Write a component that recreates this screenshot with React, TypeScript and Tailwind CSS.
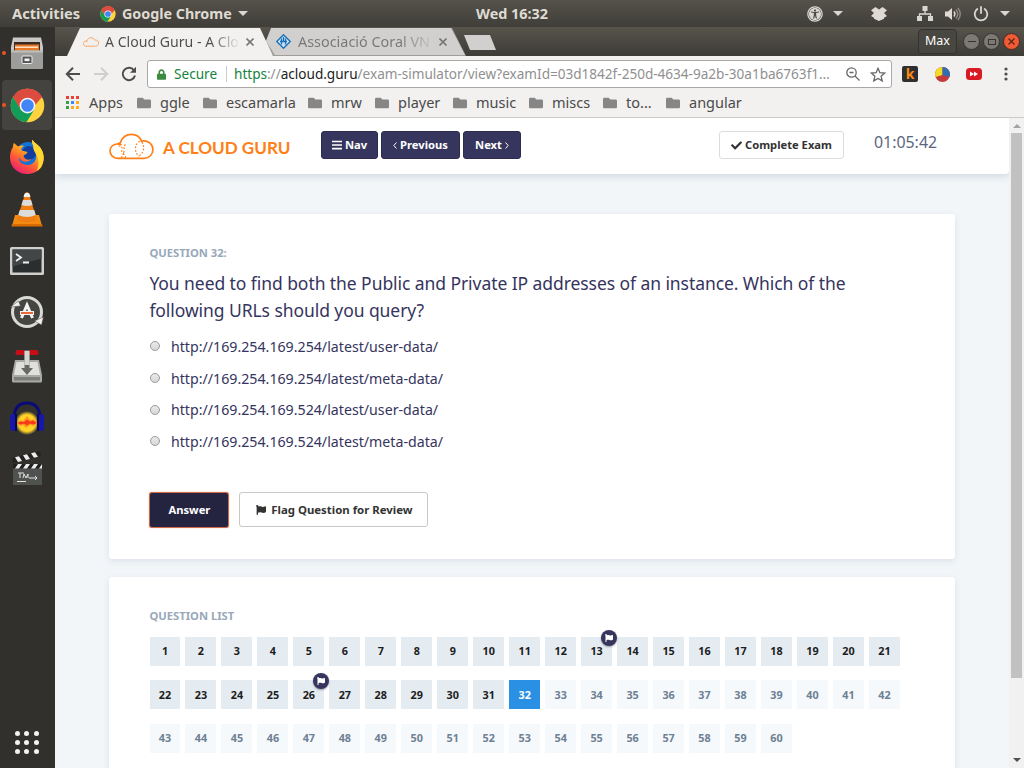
import React from 'react';
import { FaFlag, FaCheck, FaBars, FaUniversalAccess, FaLock, FaFolder } from 'react-icons/fa';

const dots = [0, 1, 2];

function ChromeLogo({ size }: { size: number }) {
  return (
    <svg width={size} height={size} viewBox="0 0 48 48" className="shrink-0">
      <circle cx="24" cy="24" r="23" fill="#ffd23f" />
      <path d="M24 24 4.1 12.5A23 23 0 0 1 43.9 12.5L34 24Z" fill="#dd4b3e" />
      <path d="M24 13H44.2A23 23 0 0 0 4.1 12.5L14 30Z" fill="#dd4b3e" />
      <path d="M4.1 12.5A23 23 0 0 0 22.5 47L33.5 29.5 24 34.5 14.5 29.5Z" fill="#119d58" />
      <circle cx="24" cy="24" r="10.8" fill="#f4f4f4" />
      <circle cx="24" cy="24" r="8.6" fill="#4285f4" />
    </svg>
  );
}

function CloudIcon({ className, detailed }: { className: string; detailed?: boolean }) {
  return (
    <svg viewBox="0 0 46 27" className={className} fill="none" stroke="#ff7f16" strokeWidth={detailed ? 1.7 : 2.6}>
      <path d="M9 25.6C4.400 25.600 1 22 1 18.200c0-4.200 3.200-7.200 7.600-7.300l3-1.200C13.400 4.400 17.600 1.100 23 1.100c4.700 0 8.600 2.900 10.300 6.900C40 6.800 44.900 11 44.900 16.600c0 5-3.800 9-8.900 9Z" />
      <path d="M8.600 10.900q2.400-.2 4.200 1" />
      {detailed && (
        <g strokeWidth="1.200" strokeDasharray="1.800 1.700">
          <path d="M9.500 13q4.500-.5 4 4-1.500 2 1 3.500 0 3-2.500 4.500M17 11.500q-3 2-1 5-.5 3-2 4 3 2 3 4.500M31.500 8q-4.500 3-4.500 8 .5 5 3.500 7.500M33.500 9q3 4 1.500 8.500-1 4-4.500 5.500" />
        </g>
      )}
    </svg>
  );
}

function Caret() {
  return <span className="block h-0 w-0 border-x-[5px] border-t-[5px] border-x-transparent border-t-[#d9d7d2]" />;
}

function FilesIcon() {
  return (
    <svg width="36" height="36" viewBox="0 0 36 36">
      <path d="M4 2.500h28L34 12v20a2 2 0 0 1-2 2H4a2 2 0 0 1-2-2V12Z" fill="#c9c9c9" />
      <path d="M5 7h26v10H5z" fill="#3a2a20" />
      <path d="M6 9.500h24v7.500H6z" fill="#e9792a" />
      <path d="M6 11.500h23v1.500H6z" fill="#ffe2c0" />
      <path d="M2 15.500h32V32a2 2 0 0 1-2 2H4a2 2 0 0 1-2-2Z" fill="#9d9d9b" />
      <path d="M2 15.500h32v2H2z" fill="#bebebc" />
      <rect x="13" y="21" width="10" height="7.500" rx="1" fill="#555" stroke="#eee" strokeWidth="1" />
      <rect x="15.500" y="23.500" width="5" height="2.600" fill="#f4f4f4" />
    </svg>
  );
}

function FirefoxIcon() {
  return (
    <svg width="36" height="36" viewBox="0 0 36 36">
      <defs>
        <linearGradient id="fox" x1="0.8" y1="0" x2="0.2" y2="1">
          <stop offset="0" stopColor="#fff04a" />
          <stop offset=".35" stopColor="#ffb01f" />
          <stop offset=".65" stopColor="#ff5a36" />
          <stop offset="1" stopColor="#e8157c" />
        </linearGradient>
      </defs>
      <circle cx="19" cy="15.500" r="12.500" fill="#1673d6" />
      <circle cx="20" cy="14" r="7" fill="#123f9e" />
      <path d="M4 8c0-1.500.3-3 1-4l4 3.500c2-1 4-1.200 6-.6C12.500 8.200 12 10 12.500 11.500l6 1.500c-.5 2-2.500 2.500-4 3.500.500 4 5 5.500 8.500 3-5 5.500-11.500 3.500-13-1.500C9 22 13 26 18.500 26c6 0 10-5 8.500-11-.8-3-3-4.500-2.500-8C22.800 4.300 23 2 23.400.800c1.600 3.200 5.100 4.200 8.100 8.200 3.500 5 4.500 12 1 18.500C29 33 23.500 35 18 35 8.500 35 1 28 1 18.500 1 14.500 2 11 4 8Z" fill="url(#fox)" />
      <path d="M23.400.800c1.600 3.200 5.100 4.200 8.100 8.200 3.500 5 4.500 12 1 18.500-1 2-3.500 4-5 4.500 3-5 2.500-12-.5-17-2-3.500-3-5-2.500-8C23 4.500 23 2 23.400.800Z" fill="#ffd732" />
    </svg>
  );
}

function VlcIcon() {
  return (
    <svg width="36" height="36" viewBox="0 0 36 36">
      <path d="M6 24h24l3 11H3Z" fill="#f58a10" />
      <path d="M3 33h30l.6 2.500H2.400Z" fill="#d76c00" />
      <path d="M16.300 2q1.700-1.400 3.400 0L28 29q-10 4.500-20 0Z" fill="#f07f13" />
      <path d="M15.500 2.700q2.500-2 5 0L21.500 6h-7Z" fill="#f2f2f0" />
      <path d="M14 9h8l1.600 5q-5.600 2-11.200 0ZM10.800 19h14.400l1.600 5q-8.800 4-17.600 0Z" fill="#dcdcda" />
    </svg>
  );
}

function TerminalIcon() {
  return (
    <svg width="36" height="30" viewBox="0 0 36 30">
      <rect x="1" y="1" width="34" height="28" rx="1.500" fill="#cfcfcd" />
      <rect x="3.500" y="3.500" width="29" height="23" fill="#2b2e2e" />
      <path d="M3.500 3.500h29v9l-29 8z" fill="#434646" />
      <path d="m7 8 5 3.500L7 15M14 16.500h6" fill="none" stroke="#f2f2f2" strokeWidth="1.800" />
    </svg>
  );
}

function UpdaterIcon() {
  return (
    <svg width="36" height="36" viewBox="0 0 36 36" className="mb-[3px]">
      <circle cx="18" cy="18" r="14.500" fill="#454542" stroke="#d9d9d7" strokeWidth="3" />
      <path d="m1.500 13 8-6 2 5ZM34.500 23l-2 8-7-4Z" fill="#f0f0ee" stroke="#454542" strokeWidth=".500" />
      <path d="m12.500 24 5.500-13 5.500 13" fill="none" stroke="#f4f4f4" strokeWidth="3" />
      <path d="M11 19h14" stroke="#f4f4f4" strokeWidth="4" />
      <path d="M12 19h12" stroke="#e75a25" strokeWidth="1.800" />
    </svg>
  );
}

function TransmissionIcon() {
  return (
    <svg width="36" height="36" viewBox="0 0 36 36">
      <path d="M6 12h24l3 15v6a1.500 1.500 0 0 1-1.500 1.500h-27A1.500 1.500 0 0 1 3 33v-6Z" fill="#a9aaa6" />
      <path d="M7.500 14h21l2.500 13H5Z" fill="#e0e1dd" />
      <path d="M5 29h26v3.500H5z" fill="#7c7e7a" />
      <rect x="6.500" y="2" width="23" height="5" rx="2.300" fill="#c90d14" />
      <path d="M15.500 2h5v18h3.500l-6 7-6-7h3.500Z" fill="#666864" />
      <path d="M15.500 3h5v14h-5z" fill="#d5d6d2" />
    </svg>
  );
}

function AudacityIcon() {
  return (
    <svg width="36" height="36" viewBox="0 0 36 36">
      <defs>
        <radialGradient id="wave">
          <stop offset="0" stopColor="#ffdc28" />
          <stop offset=".7" stopColor="#ffd028" />
          <stop offset="1" stopColor="#ffdc28" stopOpacity="0" />
        </radialGradient>
      </defs>
      <path d="M5 19C5 8 10 3 18 3s13 5 13 16" fill="none" stroke="#090b76" strokeWidth="3" />
      <ellipse cx="18" cy="23" rx="12" ry="12" fill="url(#wave)" />
      <path d="m8 23 3-3 3 1 4-5 4 4 3-1 3 4-3 3-4-1-4 3-3-3-3 1Z" fill="#ff9a1c" />
      <path d="m8 23 4-1.500 3 .5 3-2.500 3 2 3-1 4 2.500-4 1.500-3-1-3 2-3-2-3 1Z" fill="#f8381a" />
      <rect x="1" y="14" width="6" height="17" rx="3" fill="#1717a8" />
      <rect x="29" y="14" width="6" height="17" rx="3" fill="#1717a8" />
      <path d="M7 14v17M29 14v17" stroke="#070752" strokeWidth="2" />
    </svg>
  );
}

function ClapperIcon() {
  return (
    <svg width="34" height="36" viewBox="0 0 34 36" className="mb-[3px]">
      <path d="m2 8 28-7 1 5L3 13.500Z" fill="#242424" />
      <path d="m5 7.300 4-1 3 4.700-4 1ZM13 5.300l4-1 3 4.600-4 1ZM21 3.300l4-1 3 4.400-4 1Z" fill="#ededed" />
      <path d="M3 14h29v21H3z" fill="#505250" />
      <path d="M3 14h29v4.500H3z" fill="#202020" />
      <path d="m5 18.500 3-4.500h4l-3 4.500ZM13 18.500l3-4.500h4l-3 4.500ZM21 18.500l3-4.500h4l-3 4.500ZM29 18.500l3-4.500v4.500Z" fill="#ededed" />
      <path d="M8 23h6M10 23v5M13 28l1-4 2 4 2-4v4M19 28h8M25 26l2 2-2 2M7 31.500h9" fill="none" stroke="#e3e3e3" strokeWidth="1" />
    </svg>
  );
}

const dock = [FilesIcon, null, FirefoxIcon, VlcIcon, TerminalIcon, UpdaterIcon, TransmissionIcon, AudacityIcon, ClapperIcon];

function Dock() {
  return (
    <aside className="flex w-[55px] shrink-0 flex-col bg-[#32302d]">
      {dock.map((Icon, i) => (
        <div key={i} className="flex h-[52.1px] shrink-0 items-center">
          <span className={i < 2 ? 'relative z-10 ml-[2px] h-1 w-1 shrink-0 rounded-full bg-[#e95420]' : 'ml-[2px] h-1 w-1 shrink-0'} />
          <span className={i === 1 ? '-ml-[4px] flex h-[50px] w-[50px] items-center justify-center rounded bg-[#45433f]' : '-ml-[4px] flex h-[50px] w-[50px] items-center justify-center'}>
            {Icon ? <Icon /> : <ChromeLogo size={35} />}
          </span>
        </div>
      ))}
      <div className="mt-auto mb-[14px] ml-[15px] grid w-[24px] grid-cols-3 gap-x-[4px] gap-y-[4px]">
        {dots.flatMap((r) => dots.map((c) => <span key={`${r}${c}`} className="h-[5px] w-[5px] rounded-full bg-[#f4f3f1]" />))}
      </div>
    </aside>
  );
}

function SystemBar() {
  return (
    <header className="flex h-[27px] shrink-0 items-center bg-linear-to-b from-[#55524a] to-[#403e39] font-bold text-[#dfdbd2]">
      <span className="ml-3 w-[88px] text-[14.7px]">Activities</span>
      <ChromeLogo size={16} />
      <span className="ml-[6px] w-[116px] text-[14.3px]">Google Chrome</span>
      <Caret />
      <span className="ml-[228px] w-[331px] text-[14.4px]">Wed 16:32</span>
      <div className="flex flex-1 items-center">
        <FaUniversalAccess className="h-4 w-4 text-[#d9d7d2]" />
        <span className="ml-[10px]"><Caret /></span>
        <svg className="ml-[28px]" width="16" height="14" viewBox="0 0 16 14" fill="#dfdbd2">
          <path d="m4.500 0 3.500 2.500L11.500 0 16 3.300 13 6l3 3-3 1.800v1L8 14l-5-2.200v-1L0 9l3-3L0 3.300Z" />
        </svg>
        <svg className="ml-[30px]" width="16" height="15" viewBox="0 0 16 15">
          <path d="M8 4v4M2.500 11V8h11v3" fill="none" stroke="#d9d7d2" strokeWidth="1.300" />
          <path d="M5.500 0h5v5h-5zM0 10h5v5H0zM11 10h5v5h-5z" fill="#d9d7d2" />
        </svg>
        <svg className="ml-[12px]" width="16" height="14" viewBox="0 0 16 14">
          <path d="M0 4.500h3L7 1v12L3 9.500H0Z" fill="#dfdbd2" />
          <path d="M9 4.500q1.800 2.500 0 5" fill="none" stroke="#dfdbd2" strokeWidth="1.400" />
          <path d="M11 2.500q3.500 4.500 0 9M13 .800q4.500 6.200 0 12.400" fill="none" stroke="#8f8c85" strokeWidth="1.400" />
        </svg>
        <svg className="ml-[12px]" width="16" height="16" viewBox="0 0 16 16" fill="none" stroke="#d9d7d2" strokeWidth="1.800" strokeLinecap="round">
          <path d="M4.300 3a6.300 6.300 0 1 0 7.400 0M8 1v6" />
        </svg>
        <span className="ml-[11px]"><Caret /></span>
      </div>
    </header>
  );
}

function CloseGlyph({ className }: { className: string }) {
  return (
    <svg width="8" height="8" viewBox="0 0 8 8" stroke="#777" strokeWidth="1.600" className={className}>
      <path d="m.500.500 7 7M7.500.500l-7 7" />
    </svg>
  );
}

function TabStrip() {
  return (
    <div className="flex h-[29px] shrink-0 bg-linear-to-b from-[#57544c] to-[#3e3c37]">
      <div className="relative z-10 ml-[12px] h-full w-[206px] bg-[#f2f1f0] [clip-path:polygon(13px_1px,193px_1px,206px_100%,0_100%)]">
        <div className="flex h-full items-center pl-[16px]">
          <CloudIcon className="h-[10px] w-[16px] opacity-70" />
          <span className="ml-[6px] w-[138px] bg-linear-to-r from-[#4c4c4c] from-76% to-transparent to-98% bg-clip-text text-[14.1px] whitespace-nowrap text-transparent">A Cloud Guru - A Clo</span>
          <CloseGlyph className="ml-[3px]" />
        </div>
      </div>
      <div className="-ml-[8px] h-full w-[201px] bg-[#a09f9c] [clip-path:polygon(6px_1px,187px_1px,201px_100%,8px_100%,0_16px)]">
        <div className="h-full bg-[#d2d0ce] [clip-path:polygon(6px_1px,186px_1px,200px_28px,10px_28px,1px_14px)]">
          <div className="flex h-full items-center pl-[11px]">
            <svg width="15" height="15" viewBox="0 0 15 15">
              <path d="M7.500.700 14.300 7.500 7.500 14.300.700 7.500Z" fill="#c9e1f4" stroke="#1d70b7" strokeWidth="1.300" />
              <path d="M5.500 4.500v6M9.500 4.500v6M7.500 3v4.500M4 7.500h7" stroke="#1d70b7" strokeWidth="1.300" />
            </svg>
            <span className="ml-[7px] w-[138px] bg-linear-to-r from-[#777] from-74% to-transparent bg-clip-text text-[14.4px] whitespace-nowrap text-transparent">Associació Coral VN</span>
            <CloseGlyph className="ml-[3px]" />
          </div>
        </div>
      </div>
      <div className="mt-[8px] -ml-[2px] h-[15px] w-[32px] bg-[#d2d0ce] [clip-path:polygon(0_0,26px_0,32px_100%,6px_100%)]" />
      <div className="mt-[2px] mr-[4px] ml-auto flex h-[25px] items-center">
        <span className="mr-[6px] flex h-[25px] w-[39px] items-center justify-center rounded border border-[#35332f] bg-[#494741] text-[12.5px] text-white">Max</span>
        <span className="mr-[3px] flex h-[17px] w-[17px] items-center justify-center rounded-full border border-[#353430] bg-[#7b7972]">
          <span className="h-px w-[8px] bg-[#36342f]" />
        </span>
        <span className="mr-[3px] flex h-[17px] w-[17px] items-center justify-center rounded-full border border-[#353430] bg-[#7b7972]">
          <span className="h-[6px] w-[8px] border border-[#36342f]" />
        </span>
        <span className="flex h-[17px] w-[17px] items-center justify-center rounded-full border border-[#4a2a20] bg-[#f05a35]">
          <svg width="7" height="7" viewBox="0 0 7 7" stroke="#5a2414" strokeWidth="1.200"><path d="m.500.500 6 6M6.500.500l-6 6" /></svg>
        </span>
      </div>
    </div>
  );
}

function AddressBar() {
  return (
    <div className="flex h-[36px] shrink-0 items-center bg-[#f2f1f0]">
      <svg className="ml-[10px]" width="16" height="14" viewBox="0 0 16 14" fill="none" stroke="#4d4d4d" strokeWidth="2"><path d="M15 7H2M8 .800 1.800 7 8 13.200" /></svg>
      <svg className="ml-[12px]" width="16" height="14" viewBox="0 0 16 14" fill="none" stroke="#cfcecd" strokeWidth="2"><path d="M1 7h13M8 .800 14.200 7 8 13.200" /></svg>
      <svg className="ml-[12px]" width="16" height="16" viewBox="0 0 16 16" fill="none" stroke="#4d4d4d" strokeWidth="2">
        <path d="M13 4.300A6.200 6.200 0 1 0 14 9.500" />
        <path d="M15 .800v6H9Z" fill="#4d4d4d" stroke="none" />
      </svg>
      <div className="ml-[10px] flex h-[28px] w-[745px] items-center rounded-[3px] border border-[#a9a8a7] bg-white text-[13.6px] text-[#909090]">
        <FaLock className="ml-[9px] h-[11px] w-[9px] text-[#3d8b40]" />
        <span className="ml-[8px] w-[52px] text-[#14833b]">Secure</span>
        <span className="mr-[7px] h-[16px] w-px bg-[#ccc]" />
        <span className="w-[612px] tracking-[-0.02px] whitespace-nowrap">
          <span className="text-[#14833b]">https</span>://<span className="text-[#222]">acloud.guru</span>/exam-simulator/view?examId=03d1842f-250d-4634-9a2b-30a1ba6763f1…
        </span>
        <svg width="14" height="14" viewBox="0 0 14 14" fill="none" stroke="#666" strokeWidth="1.300"><circle cx="5.500" cy="5.500" r="4.700" /><path d="m9 9 4.500 4.500M3.500 5.500h4" /></svg>
        <svg className="ml-[10px]" width="16" height="15" viewBox="0 0 16 15" fill="none" stroke="#666" strokeWidth="1.300"><path d="m8 1.300 1.900 4.400 4.800.4-3.600 3.200 1.100 4.600L8 11.400l-4.200 2.500 1.100-4.600L1.300 6.100l4.800-.4Z" /></svg>
      </div>
      <span className="ml-[10px] flex h-4 w-4 items-center justify-center rounded-[2px] bg-[#2f2f2f] text-[14px] leading-none font-bold text-[#ff8a10]">k</span>
      <svg className="ml-[17px]" width="15" height="15" viewBox="0 0 15 15">
        <circle cx="7.500" cy="7.500" r="7.500" fill="#c33a3c" />
        <path d="M7.500 8 7.500 0A7.500 7.500 0 0 0 .500 10Z" fill="#f3dc23" />
        <path d="M7.500 8V0a7.500 7.500 0 0 1 7 10Z" fill="#2f6db5" />
      </svg>
      <svg className="ml-[16px]" width="16" height="12" viewBox="0 0 16 12">
        <rect width="16" height="12" rx="3.500" fill="#d91a22" />
        <path d="M4 3.500 8 6 4 8.500ZM8 3.500 12 6 8 8.500Z" fill="#fff" />
      </svg>
      <svg className="ml-[22px]" width="4" height="14" viewBox="0 0 4 14" fill="#4d4d4d"><circle cx="2" cy="2" r="1.600" /><circle cx="2" cy="7" r="1.600" /><circle cx="2" cy="12" r="1.600" /></svg>
    </div>
  );
}

const appColors = ['bg-[#ea4335]', 'bg-[#ea4335]', 'bg-[#ea4335]', 'bg-[#34a04f]', 'bg-[#4285f4]', 'bg-[#fbac1c]', 'bg-[#34a04f]', 'bg-[#fbac1c]', 'bg-[#fbac1c]'];
const folders = [
  ['ggle', 'w-[66px]'],
  ['escamarla', 'w-[105px]'],
  ['mrw', 'w-[67px]'],
  ['player', 'w-[78px]'],
  ['music', 'w-[76px]'],
  ['miscs', 'w-[74px]'],
  ['to...', 'w-[63px]'],
  ['angular', 'w-[90px]'],
];

function Bookmarks() {
  return (
    <div className="flex h-[26px] shrink-0 items-center border-b border-[#cbcac9] bg-[#f2f1f0] pb-[4px] text-[14.5px] text-[#4a4a4a]">
      <div className="ml-[11px] grid grid-cols-3 gap-[2px]">
        {appColors.map((c, i) => <span key={i} className={`h-[3px] w-[3px] ${c}`} />)}
      </div>
      <span className="ml-[10px] w-[48px]">Apps</span>
      {folders.map(([name, width]) => (
        <div key={name} className={`flex shrink-0 items-center ${width}`}>
          <FaFolder className="mr-[9px] h-[14px] w-[14px] shrink-0 text-[#868686]" />
          {name}
        </div>
      ))}
    </div>
  );
}

const navButton = 'flex h-[28px] items-center justify-center rounded-[3px] border border-[#2c2b50] bg-[#36355d] text-[11.2px] font-bold text-white';

function ExamHeader() {
  return (
    <div className="relative flex h-[56px] shrink-0 items-start rounded-br bg-white shadow-[0_2px_8px_rgba(70,85,120,0.2)]">
      <CloudIcon detailed className="mt-[15px] ml-[54px] h-[27px] w-[45px]" />
      <span className="mt-[17px] ml-[9px] w-[158px] font-[Lato] text-[17.1px] font-bold text-[#ff7f16]">A CLOUD GURU</span>
      <div className="mt-[13px] flex gap-[3px]">
        <span className={`w-[57px] gap-[3px] ${navButton}`}><FaBars className="h-[12px] w-[10px]" />Nav</span>
        <span className={`w-[79px] gap-[3px] ${navButton}`}>
          <svg width="4" height="7" viewBox="0 0 4 7" fill="none" stroke="#fff"><path d="M3.500.500.800 3.500l2.700 3" /></svg>Previous
        </span>
        <span className={`w-[58px] gap-[3px] ${navButton}`}>
          Next<svg width="4" height="7" viewBox="0 0 4 7" fill="none" stroke="#fff"><path d="m.500.500 2.700 3-2.700 3" /></svg>
        </span>
      </div>
      <span className="mt-[13px] ml-[198px] flex h-[28px] w-[125px] items-center justify-center gap-[3px] rounded-[3px] border border-[#dcdcdc] text-[11.2px] font-bold text-[#333]">
        <FaCheck className="h-[11px] w-[11px]" />Complete Exam
      </span>
      <span className="mt-[13px] ml-[30px] text-[15.9px] text-[#5b6680]">01:05:42</span>
    </div>
  );
}

const options = ['http://169.254.169.254/latest/user-data/', 'http://169.254.169.254/latest/meta-data/', 'http://169.254.169.524/latest/user-data/', 'http://169.254.169.524/latest/meta-data/'];

function QuestionCard() {
  return (
    <section className="h-[345px] w-[846px] shrink-0 rounded-[3px] bg-white pl-[40.4px] text-[#35345d] shadow-[0_2px_6px_rgba(70,85,120,0.13)]">
      <h2 className="pt-[31px] text-[11.2px] leading-[16px] font-bold text-[#98a8ba]">QUESTION 32:</h2>
      <p className="mt-[9px] text-[17.5px] leading-[27px] tracking-[-0.07px] whitespace-nowrap">
        You need to find both the Public and Private IP addresses of an instance. Which of the<br />following URLs should you query?
      </p>
      <ul className="mt-[7px]">
        {options.map((o) => (
          <li key={o} className="flex h-[31.7px] items-center text-[14.2px] leading-[20px]">
            <span className="mb-px ml-[0.6px] h-[10px] w-[10px] rounded-full border border-[#9a9a9a] bg-linear-to-b from-[#e9e9e9] to-[#d8d8d8]" />
            <span className="ml-[11px]">{o}</span>
          </li>
        ))}
      </ul>
      <div className="mt-[34.600px] flex gap-[10px] text-[11.4px] font-bold">
        <span className="flex h-[36px] w-[80px] items-center justify-center rounded-[3px] border border-[#d0694a] bg-[#252440] text-[11.2px] text-white shadow-[0_0_1px_#e97950]">Answer</span>
        <span className="flex h-[35px] w-[189px] items-center justify-center gap-[4px] rounded-[3px] border border-[#c8c8c8] text-[#333]">
          <FaFlag className="h-[10px] w-[12px]" />Flag Question for Review
        </span>
      </div>
    </section>
  );
}

function cellTone(n: number) {
  if (n === 32) return 'bg-[#2990e4] text-white';
  return n < 32 ? 'bg-[#e5ecf1] text-[#1d1d1d]' : 'bg-[#f5f9fc] text-[#6e8093]';
}

function QuestionList() {
  return (
    <section className="mt-[18px] h-[230px] w-[846px] shrink-0 rounded-t-[3px] bg-white pl-[40.5px] shadow-[0_2px_6px_rgba(70,85,120,0.13)]">
      <h2 className="pt-[31px] text-[11.2px] leading-[16px] font-bold text-[#98a8ba]">QUESTION LIST</h2>
      <div className="mt-[13px] grid w-[750.4px] grid-cols-21 gap-x-[5px] gap-y-[14.3px]">
        {Array.from({ length: 60 }, (_, i) => i + 1).map((n) => (
          <div key={n} className={`relative flex h-[29px] items-center justify-center text-[10.800px] font-bold ${cellTone(n)}`}>
            {n}
            {(n === 13 || n === 26) && (
              <span className="absolute -top-[7px] -right-[5px] z-10 flex h-[16px] w-[16px] items-center justify-center rounded-full bg-[#36355d] shadow-[0_1px_2px_rgba(0,0,0,0.35)]">
                <FaFlag className="h-[8px] w-[8px] text-white" />
              </span>
            )}
          </div>
        ))}
      </div>
    </section>
  );
}

function Scrollbar() {
  return (
    <div className="flex w-[15px] shrink-0 flex-col items-center bg-[#f1f1f1]">
      <span className="mt-[6px] h-0 w-0 border-x-[4px] border-b-[4px] border-x-transparent border-b-[#a3a3a3]" />
      <span className="mt-[5px] h-[545px] w-[11px] bg-[#c1c1c1]" />
      <span className="mt-auto mb-[6px] h-0 w-0 border-x-[4px] border-t-[4px] border-x-transparent border-t-[#505050]" />
    </div>
  );
}

export default function App() {
  return (
    <div className="flex h-[768px] w-[1024px] flex-col overflow-hidden font-['Noto_Sans',sans-serif]">
      <SystemBar />
      <div className="flex min-h-0 flex-1">
        <Dock />
        <div className="flex min-w-0 flex-1 flex-col">
          <TabStrip />
          <AddressBar />
          <Bookmarks />
          <div className="flex min-h-0 flex-1">
            <main className="flex min-w-0 flex-1 flex-col overflow-hidden bg-[#f2f6f9]">
              <ExamHeader />
              <div className="ml-[54px] flex flex-col pt-[40px]">
                <QuestionCard />
                <QuestionList />
              </div>
            </main>
            <Scrollbar />
          </div>
        </div>
      </div>
    </div>
  );
}
